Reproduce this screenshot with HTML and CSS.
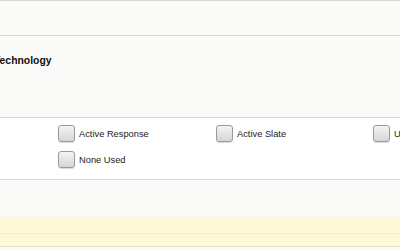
FILE: index.html
```html
<!DOCTYPE html>
<html lang="en">
<head>
    <meta charset="UTF-8">
    <meta name="viewport" content="width=device-width, initial-scale=1.0">
    <title>Technology</title>
    <link rel="stylesheet" href="styles.css">
</head>
<body>
    <div class="page">
        <div class="band top-band"></div>
        <div class="band title-band">
            <h2 class="field-title">Technology</h2>
        </div>
        <div class="band options-band">
            <div class="options">
                <label class="option"><span class="box"></span>Active Response</label>
                <label class="option"><span class="box"></span>Active Slate</label>
                <label class="option"><span class="box"></span>Used</label>
                <label class="option"><span class="box"></span>None Used</label>
            </div>
        </div>
        <div class="band blank-band"></div>
        <div class="band note-band">
            <div class="note-row"></div>
            <div class="note-row last"></div>
        </div>
    </div>
</body>
</html>
```

FILE: styles.css
```css
body {
    margin: 0;
    font-family: "Liberation Sans", Arial, sans-serif;
    background-color: #fafaf8;
    overflow: hidden;
}
.page {
    width: 400px;
    border-top: 1px solid #d6d6d4;
}
.band {
    border-bottom: 1px solid #d6d6d4;
}
.top-band {
    height: 34px;
}
.title-band {
    height: 82px;
    box-sizing: border-box;
    padding-top: 19px;
}
.field-title {
    margin: 0 0 0 -6px; /* 左边的 T 被裁掉 */
    font-size: 10.4px;
    font-weight: bold;
    color: #111;
}
.options-band {
    height: 62px;
    box-sizing: border-box;
    padding: 7px 0 0 58px;
    background-color: #fff;
    white-space: nowrap;
}
.options {
    display: grid;
    grid-template-columns: 158px 157px 157px;
    row-gap: 9px;
}
.option {
    display: flex;
    align-items: center;
    gap: 4px;
    font-size: 9.3px;
    color: #1a1a1a;
}
.box {
    width: 15px;
    height: 15px;
    border: 1px solid #9a9a9a;
    border-radius: 3px;
    background: linear-gradient(#f4f4f4, #d6d6d6);
    box-shadow: 0 1px 1px rgba(0, 0, 0, 0.15);
    flex: none;
}
.blank-band {
    height: 37px;
    border-bottom: none;
}
.note-band {
    background-color: #fcf8d8;
    border-bottom: none;
}
.note-row {
    height: 16px;
    border-bottom: 1px solid #f1edcf;
}
.note-row.last {
    height: 12px;
    border-bottom-color: #e4e2cc;
}
```
